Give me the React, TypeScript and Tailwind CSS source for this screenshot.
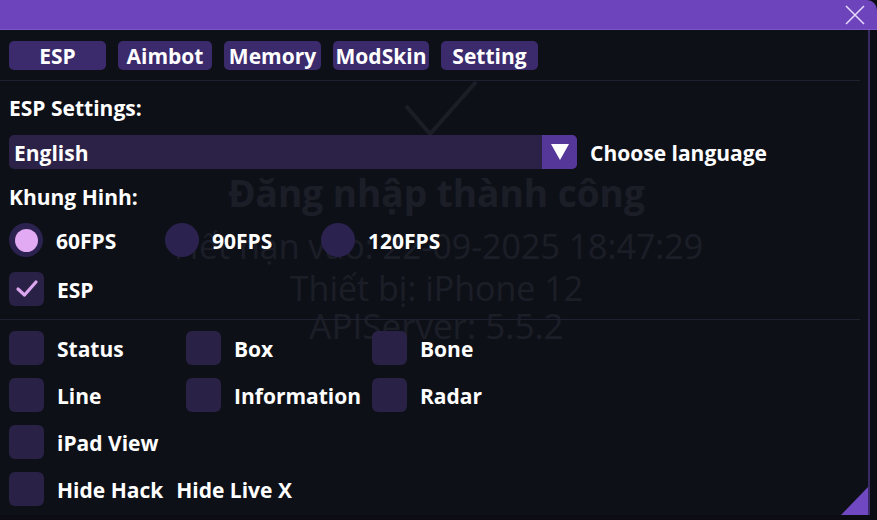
import React from "react";

const font = { fontFamily: "'Open Sans', Lato, sans-serif" };
const bgFont = { fontFamily: "'Open Sans', 'Noto Sans', sans-serif" };

function Box({ checked = false }: { checked?: boolean }) {
  return (
    <div className="w-[35px] h-[34px] rounded-[6px] bg-[#2a2146] flex items-center justify-center shrink-0">
      {checked && (
        <svg width="24" height="20" viewBox="0 0 24 20">
          <path d="M3 10 L9.5 16 L21 3" fill="none" stroke="#dca6ef" strokeWidth="3.2" strokeLinecap="round" strokeLinejoin="round" />
        </svg>
      )}
    </div>
  );
}

function Check({ label, w, checked }: { label: string; w?: string; checked?: boolean }) {
  return (
    <div className={`flex items-center gap-[13px] ${w ?? ""}`}>
      <Box checked={checked} />
      <span className="text-white text-[21px] font-bold leading-none whitespace-nowrap pt-[2px]">{label}</span>
    </div>
  );
}

function Radio({ label, on }: { label: string; on?: boolean }) {
  return (
    <div className="flex items-center gap-[13px] w-[156px]">
      <div className="w-[34px] h-[34px] rounded-full bg-[#2c2250] flex items-center justify-center shrink-0">
        {on && <div className="w-[23px] h-[23px] rounded-full bg-[#e2aaf2]" />}
      </div>
      <span className="text-white text-[21px] font-bold leading-none pt-[2px]">{label}</span>
    </div>
  );
}

function Tab({ label, w }: { label: string; w: string }) {
  return (
    <div className={`h-[29px] ${w} rounded-[5px] bg-[#3b2a6c] flex items-center justify-center text-white text-[21px] font-bold leading-none whitespace-nowrap overflow-hidden pt-[2px]`}>
      {label}
    </div>
  );
}

export default function App() {
  return (
    <div className="relative w-[877px] h-[520px] bg-[#0c0d14] overflow-hidden" style={font}>
      {/* background app content showing through */}
      <div className="absolute inset-0 pointer-events-none">
        <svg className="absolute left-[400px] top-[78px]" width="80" height="62" viewBox="0 0 80 62">
          <path d="M6 28 L30 56 L76 4" fill="none" stroke="#575a66" strokeWidth="4" />
        </svg>
        <div className="absolute left-[-2px] w-[877px] top-[165px] text-center text-[37px] font-bold text-[#575a66] whitespace-nowrap" style={bgFont}>
          Đăng nhập thành công
        </div>
        <div className="absolute left-0 w-[877px] top-[221px] text-center text-[34px] text-[#575a66] whitespace-nowrap" style={bgFont}>
          Hết hạn vào: 22-09-2025 18:47:29
        </div>
        <div className="absolute left-[-2px] w-[877px] top-[263px] text-center text-[34px] text-[#575a66] whitespace-nowrap" style={bgFont}>
          Thiết bị: iPhone 12
        </div>
        <div className="absolute left-[-2px] w-[877px] top-[300px] text-center text-[35px] text-[#575a66] whitespace-nowrap" style={bgFont}>
          APIServer: 5.5.2
        </div>
      </div>

      <div className="relative w-[877px] h-[515px] flex flex-col">
        {/* title bar */}
        <div className="h-[30px] bg-[#6d44bb] rounded-tr-[10px] flex justify-end items-center pr-[11px] shrink-0 border-b border-[#7b55c8]">
          <svg width="22" height="22" viewBox="0 0 22 22">
            <path d="M2 2 L20 20 M20 2 L2 20" stroke="#e9dcff" strokeWidth="1.5" />
          </svg>
        </div>
        <div className="relative flex-1 w-[870px] bg-[#0f111a]/[0.82] border-r-2 border-[#3a2a66] pl-[9px] flex flex-col">
          <div className="flex mt-[11px] gap-[12px]">
            <Tab label="ESP" w="w-[97px]" />
            <Tab label="Aimbot" w="w-[94px]" />
            <Tab label="Memory" w="w-[97px]" />
            <Tab label="ModSkin" w="w-[96px]" />
            <Tab label="Setting" w="w-[97px]" />
          </div>
          <div className="h-px bg-[#1f2131] mt-[10px] -ml-[9px] mr-[8px]" />
          <div className="mt-[15px] h-[24px] flex items-center text-white text-[21px] font-bold leading-none">ESP Settings:</div>
          <div className="mt-[15px] flex items-center">
            <div className="w-[568px] h-[34px] rounded-[5px] bg-[#2c2147] flex items-center overflow-hidden">
              <span className="flex-1 pl-[5px] pt-[2px] text-white text-[21px] font-bold leading-none">English</span>
              <div className="w-[35px] h-[34px] bg-[#553699] flex items-center justify-center">
                <svg width="20" height="18" viewBox="0 0 20 18">
                  <path d="M1 1 L19 1 L10 17 Z" fill="#ffffff" />
                </svg>
              </div>
            </div>
            <span className="ml-[13px] pt-[2px] text-white text-[21px] font-bold leading-none">Choose language</span>
          </div>
          <div className="mt-[16px] h-[24px] flex items-center text-white text-[21px] font-bold leading-none">Khung Hinh:</div>
          <div className="mt-[14px] flex items-center">
            <Radio label="60FPS" on />
            <Radio label="90FPS" />
            <Radio label="120FPS" />
          </div>
          <div className="mt-[15px]">
            <Check label="ESP" checked />
          </div>
          <div className="h-px bg-[#1f2131] mt-[13px] -ml-[9px] mr-[8px]" />
          <div className="mt-[11px] flex flex-col gap-[13px]">
            <div className="flex">
              <Check label="Status" w="w-[177px]" />
              <Check label="Box" w="w-[186px]" />
              <Check label="Bone" />
            </div>
            <div className="flex">
              <Check label="Line" w="w-[177px]" />
              <Check label="Information" w="w-[186px]" />
              <Check label="Radar" />
            </div>
            <div className="flex">
              <Check label="iPad View" />
            </div>
            <div className="flex items-center">
              <Check label="Hide Hack" />
              <span className="ml-[13px] pt-[2px] text-white text-[21px] font-bold leading-none">Hide Live X</span>
            </div>
          </div>
          {/* resize grip */}
          <svg className="absolute right-0 bottom-0" width="27" height="28" viewBox="0 0 27 28">
            <path d="M27 0 L27 28 L0 28 Z" fill="#7048c2" />
          </svg>
        </div>
      </div>
    </div>
  );
}
